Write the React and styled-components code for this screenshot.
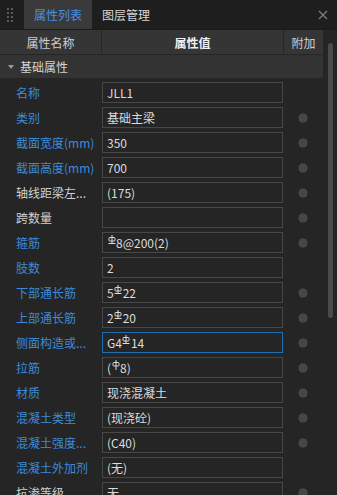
import React from 'react';
import styled, { createGlobalStyle } from 'styled-components';

const Global = createGlobalStyle`
  html, body { margin: 0; padding: 0; background: #252526; }
  body { font-family: "Noto Sans CJK SC", "Noto Sans", sans-serif; font-size: 12px; color: #d4d4d4; }
  #root { width: 337px; height: 495px; overflow: hidden; }
`;

const Panel = styled.div`
  width: 337px;
  height: 495px;
  display: flex;
  flex-direction: column;
  background: #252526;
  overflow: hidden;
`;

const TabBar = styled.div`
  height: 30px;
  flex: none;
  display: flex;
  align-items: stretch;
  background: #1e1e1f;
  border-bottom: 1px solid #1a1a1a;
  box-sizing: border-box;
`;

const Grip = styled.div`
  width: 24px;
  display: grid;
  grid-template-columns: 2px 2px;
  grid-auto-rows: 2px;
  column-gap: 2px;
  row-gap: 2px;
  align-content: center;
  justify-content: center;
  padding-right: 6px;
  padding-left: 1px;
  box-sizing: border-box;
  span { background: #5c5c5c; }
`;

const Tab = styled.div`
  display: flex;
  align-items: center;
  padding: 0 10px;
  font-size: 12px;
  background: ${p => (p.$active ? '#3a3a3b' : 'transparent')};
  color: ${p => (p.$active ? '#4a8fe0' : '#d6d6d6')};
`;

const Close = styled.div`
  margin-left: auto;
  width: 28px;
  display: flex;
  align-items: center;
  justify-content: center;
  color: #7a7a7a;
`;

const Body = styled.div`
  flex: 1;
  display: flex;
  min-height: 0;
`;

const Table = styled.div`
  width: 323px;
  flex: none;
  display: flex;
  flex-direction: column;
`;

const HeaderRow = styled.div`
  height: 24px;
  flex: none;
  display: grid;
  grid-template-columns: 101px 182px 40px;
  background: #353536;
  border-bottom: 1px solid #262627;
`;

const HeaderCell = styled.div`
  display: flex;
  align-items: center;
  justify-content: center;
  font-size: 12px;
  font-weight: ${p => (p.$bold ? 700 : 400)};
  color: ${p => (p.$bold ? '#f0f0f0' : '#cfcfcf')};
  border-left: ${p => (p.$divider ? '1px solid #262627' : 'none')};
`;

const GroupRow = styled.div`
  height: 23px;
  flex: none;
  display: flex;
  align-items: center;
  gap: 6px;
  padding-left: 8px;
  background: #333334;
  color: #d4d4d4;
  font-size: 12px;
  margin-bottom: 2px;
`;

const Caret = styled.span`
  width: 0;
  height: 0;
  border-left: 3px solid transparent;
  border-right: 3px solid transparent;
  border-top: 4px solid #9a9a9a;
  margin-top: 1px;
`;

const Row = styled.div`
  height: 25px;
  flex: none;
  display: grid;
  grid-template-columns: 102px 181px 40px;
  align-items: center;
`;

const Label = styled.div`
  padding-left: 16px;
  font-size: 12px;
  white-space: nowrap;
  overflow: hidden;
  color: ${p => (p.$blue ? '#3c8bd8' : '#d0d0d0')};
`;

const Value = styled.div`
  height: 21px;
  box-sizing: border-box;
  border: 1px solid ${p => (p.$focus ? '#1f6fb0' : '#474748')};
  background: #252526;
  display: flex;
  align-items: center;
  padding-left: 4px;
  font-size: 12px;
  color: #dcdcdc;
  white-space: nowrap;
  overflow: hidden;
`;

const DotCell = styled.div`
  display: flex;
  justify-content: center;
  align-items: center;
`;

const Dot = styled.span`
  width: 8px;
  height: 8px;
  border-radius: 50%;
  background: #464647;
  box-shadow: 0 0 0 0.5px #555;
`;

const ScrollCol = styled.div`
  flex: 1;
  display: flex;
  justify-content: center;
  padding-top: 13px;
  padding-left: 1px;
`;

const Thumb = styled.div`
  width: 5px;
  height: 275px;
  border-radius: 3px;
  background: #4a4a4b;
`;

const GlyphSvg = styled.svg`
  width: 8px;
  height: 10px;
  margin: 0 0.5px;
  position: relative;
  top: -3px;
  flex: none;
`;

const Rebar = ({ grade = 3 }) => (
  <GlyphSvg viewBox="0 0 8 10" fill="none" stroke="#dcdcdc" strokeWidth="1">
    <rect x="1" y="2.5" width="6" height="3.5" rx="0.8" />
    <line x1="4" y1="0" x2="4" y2={grade === 3 ? 8 : 10} />
    {grade === 3 && <line x1="0.5" y1="8.5" x2="7.5" y2="8.5" />}
  </GlyphSvg>
);

const G = <Rebar grade={3} />;

const rows = [
  { label: '名称', value: 'JLL1', blue: true },
  { label: '类别', value: '基础主梁', blue: true, dot: true },
  { label: '截面宽度(mm)', value: '350', blue: true, dot: true },
  { label: '截面高度(mm)', value: '700', blue: true, dot: true },
  { label: '轴线距梁左...', value: '(175)', dot: true },
  { label: '跨数量', value: '', dot: true },
  { label: '箍筋', value: [G, '8@200(2)'], blue: true, dot: true },
  { label: '肢数', value: '2', blue: true },
  { label: '下部通长筋', value: ['5', G, '22'], blue: true, dot: true },
  { label: '上部通长筋', value: ['2', G, '20'], blue: true, dot: true },
  { label: '侧面构造或...', value: ['G4', G, '14'], blue: true, dot: true, focus: true },
  { label: '拉筋', value: ['(', <Rebar grade={1} />, '8)'], blue: true, dot: true },
  { label: '材质', value: '现浇混凝土', blue: true, dot: true },
  { label: '混凝土类型', value: '(现浇砼)', blue: true, dot: true },
  { label: '混凝土强度...', value: '(C40)', blue: true, dot: true },
  { label: '混凝土外加剂', value: '(无)', blue: true },
  { label: '抗渗等级', value: '无', dot: true },
];

export default function App() {
  return (
    <Panel>
      <Global />
      <TabBar>
        <Grip>
          <span /><span /><span /><span /><span /><span /><span /><span />
        </Grip>
        <Tab $active>属性列表</Tab>
        <Tab>图层管理</Tab>
        <Close>
          <svg width="10" height="10" viewBox="0 0 10 10" stroke="#7d7d7d" strokeWidth="1.2">
            <line x1="1" y1="1" x2="9" y2="9" />
            <line x1="9" y1="1" x2="1" y2="9" />
          </svg>
        </Close>
      </TabBar>
      <Body>
        <Table>
          <HeaderRow>
            <HeaderCell>属性名称</HeaderCell>
            <HeaderCell $bold $divider>属性值</HeaderCell>
            <HeaderCell $divider>附加</HeaderCell>
          </HeaderRow>
          <GroupRow>
            <Caret />
            基础属性
          </GroupRow>
          {rows.map((r, i) => (
            <Row key={i}>
              <Label $blue={r.blue}>{r.label}</Label>
              <Value $focus={r.focus}>
                {Array.isArray(r.value)
                  ? r.value.map((v, j) => <React.Fragment key={j}>{v}</React.Fragment>)
                  : r.value}
              </Value>
              <DotCell>{r.dot && <Dot />}</DotCell>
            </Row>
          ))}
        </Table>
        <ScrollCol>
          <Thumb />
        </ScrollCol>
      </Body>
    </Panel>
  );
}
